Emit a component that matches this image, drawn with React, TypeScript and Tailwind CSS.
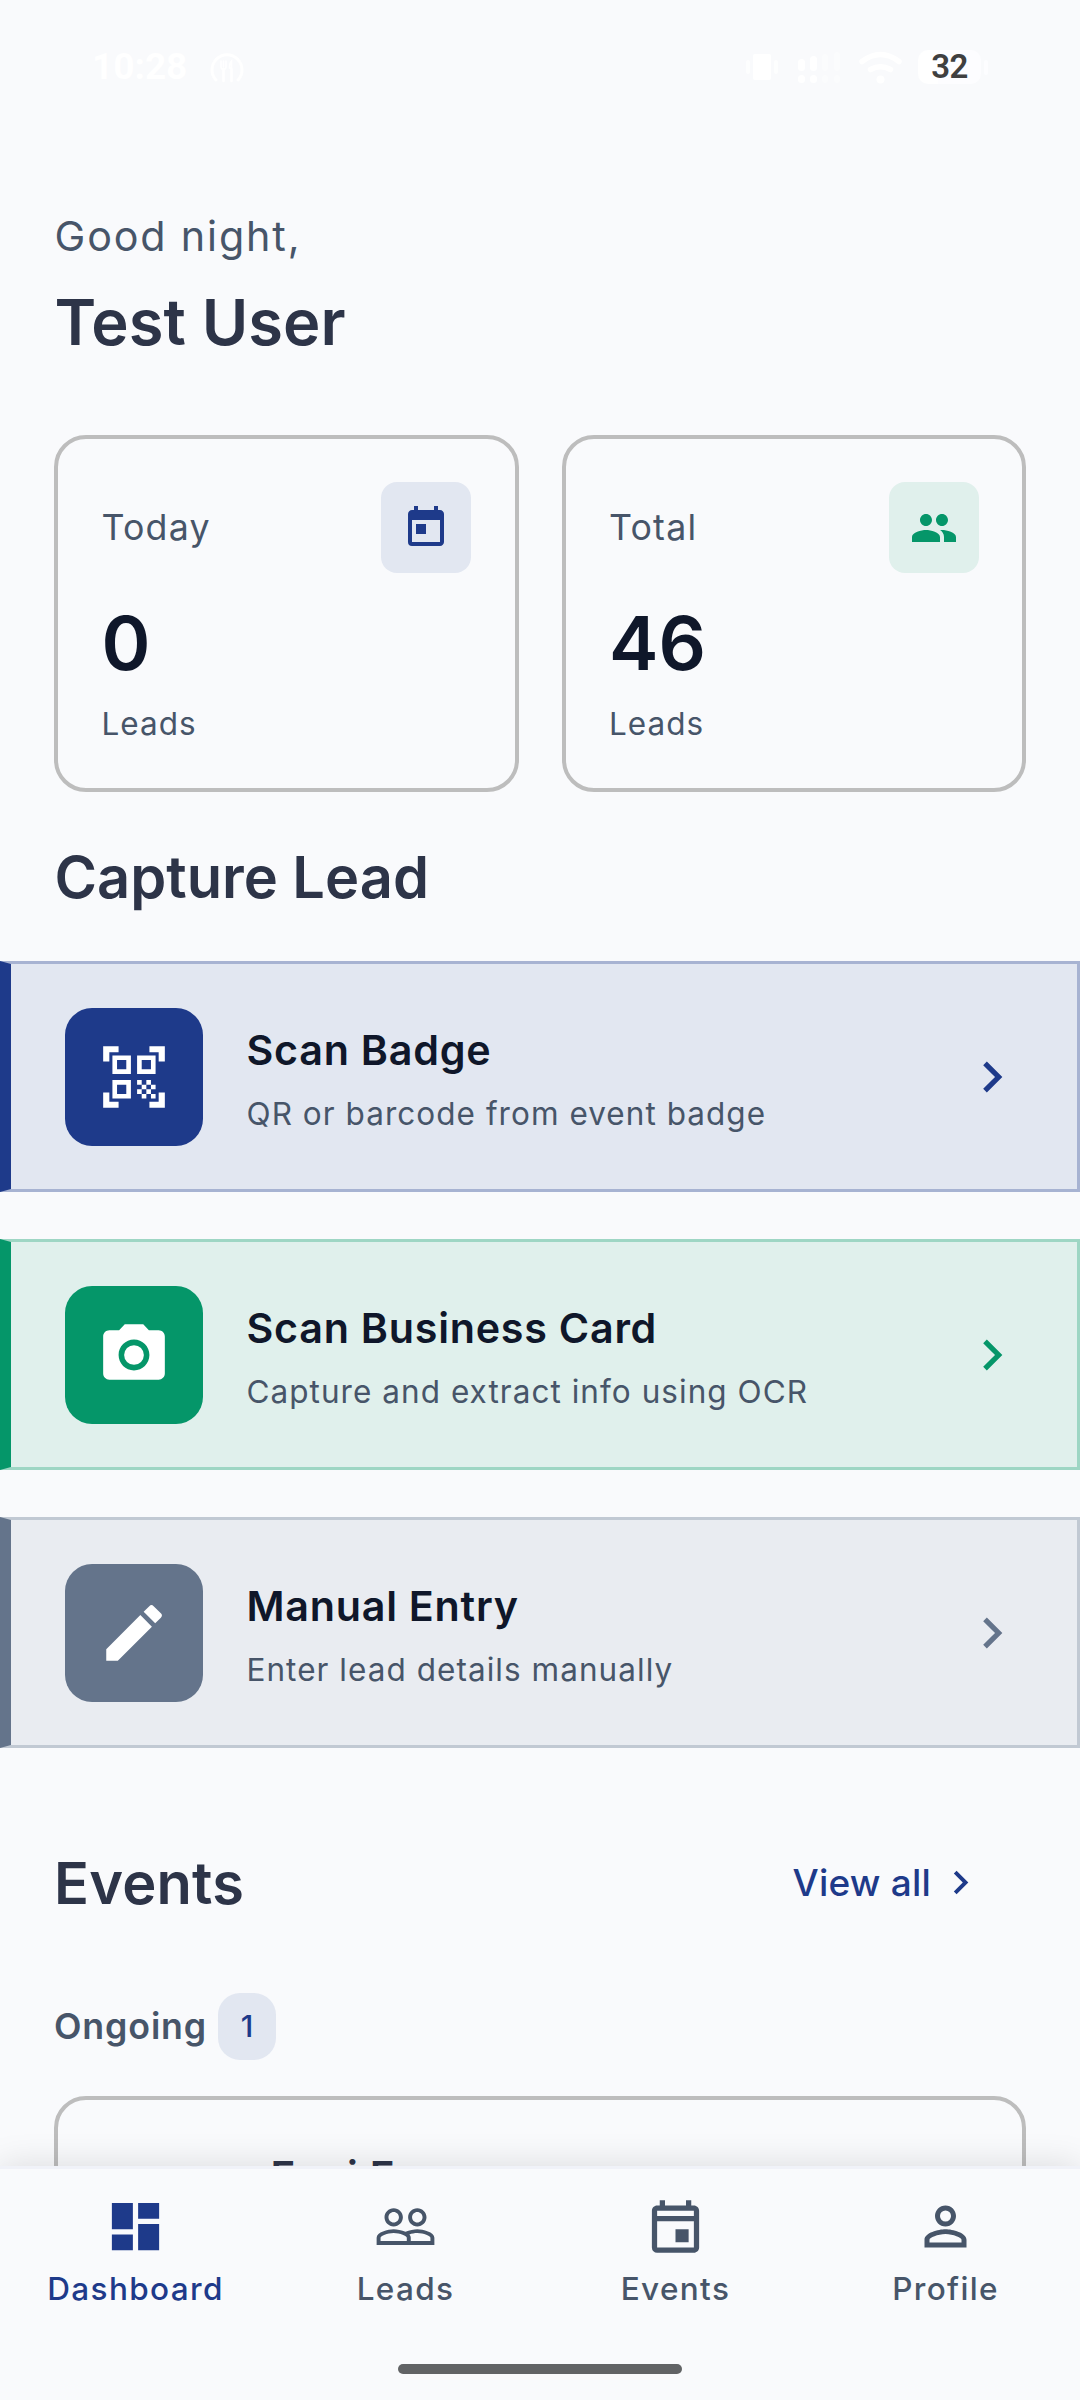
import type { ReactNode } from 'react';
import type { IconType } from 'react-icons';
import {
  MdCameraAlt,
  MdChevronRight,
  MdDashboard,
  MdEdit,
  MdOutlineEvent,
  MdPeople,
  MdPeopleOutline,
  MdPersonOutline,
  MdQrCodeScanner,
  MdToday,
} from 'react-icons/md';

function StatusBar() {
  return (
    <div className="flex h-[134px] shrink-0 items-start justify-between pt-[50px] pr-[92px] pl-[92px] font-[Roboto]">
      <div className="flex h-[34px] items-center text-white">
        <span className="w-[118px] text-[37px] leading-[34px] font-bold">10:28</span>
        <svg width="34" height="32" viewBox="0 0 34 32" fill="none" stroke="currentColor" strokeLinecap="round">
          <path d="M6 29A15 15 0 1 1 28 29" strokeWidth="3" />
          <path d="M13.5 18v12M21.5 18v12" strokeWidth="2.6" />
          <path d="M11 10v5.5q0 3 2.5 3t2.5-3v-5.5M13.5 10v6M21.5 10q-2 2-2 7h2z" strokeWidth="1.6" />
        </svg>
      </div>
      <div className="flex h-[34px] items-center">
        <svg width="32" height="28" viewBox="0 0 32 28" fill="#fff" className="mr-[20px]">
          <rect x="7" y="1" width="18" height="26" rx="2" />
          <rect x="0" y="7" width="4" height="14" rx="2" opacity=".7" />
          <rect x="28" y="7" width="4" height="14" rx="2" opacity=".7" />
        </svg>
        <svg width="43" height="32" viewBox="0 0 43 32" fill="#fff" className="mr-[18px]">
          <rect x="0" y="8" width="7" height="12" rx="3.5" />
          <rect x="0" y="24" width="7" height="8" rx="3.5" />
          <rect x="12" y="5" width="7" height="15" rx="3.5" />
          <rect x="12" y="24" width="7" height="8" rx="3.5" />
          <g opacity=".4">
            <rect x="24" y="3" width="6" height="17" rx="3" />
            <rect x="24" y="24" width="6" height="8" rx="3" />
            <rect x="36" y="1" width="6" height="19" rx="3" />
            <rect x="36" y="24" width="6" height="8" rx="3" />
          </g>
        </svg>
        <svg width="43" height="33" viewBox="0 0 43 33" fill="none" stroke="#fff" strokeLinecap="round" className="mr-[16px]">
          <path d="M3 10.5Q21.5-3.5 40 10.5" strokeWidth="5.5" />
          <path d="M11.5 18.5Q21.5 13 31.5 18.5" strokeWidth="5.5" />
          <circle cx="21.5" cy="28.5" r="4" fill="#fff" stroke="none" />
        </svg>
        <div className="flex h-[34px] w-[63px] items-center justify-center rounded-[10px] bg-linear-to-r from-white from-32% to-[#fdfdff] to-32%">
          <span className="text-[33px] leading-[34px] font-semibold tracking-[-0.5px] text-[#404040]">32</span>
        </div>
        <div className="ml-[3px] h-[15px] w-[4px] rounded-full bg-[#fdfdff]" />
      </div>
    </div>
  );
}

function StatCard({ label, value, tile, icon }: { label: string; value: string; tile: string; icon: ReactNode }) {
  return (
    <div className="h-[357px] flex-1 rounded-[32px] border-4 border-[#bdbdbd] px-[43.5px] pt-[43px]">
      <div className="flex h-[91px] items-center justify-between">
        <span className="text-[35.75px] tracking-[1.2px] text-[#475569]">{label}</span>
        <div className={`flex h-[91px] w-[90px] items-center justify-center rounded-[16px] ${tile}`}>{icon}</div>
      </div>
      <div className="mt-[25px] text-[74.25px] leading-[90px] font-semibold text-[#0f172a]">{value}</div>
      <div className="mt-[16px] text-[31.5px] leading-[40px] tracking-[1px] text-[#475569]">Leads</div>
    </div>
  );
}

type Action = { title: string; hint: string; icon: IconType; card: string; tile: string; chevron: string };

const actions: Action[] = [
  {
    title: 'Scan Badge',
    hint: 'QR or barcode from event badge',
    icon: MdQrCodeScanner,
    card: 'border-[#a7b3d2] border-l-[#1e3a8a] bg-[#e2e7f1]',
    tile: 'bg-[#1e3a8a]',
    chevron: 'text-[#1e3a8a]',
  },
  {
    title: 'Scan Business Card',
    hint: 'Capture and extract info using OCR',
    icon: MdCameraAlt,
    card: 'border-[#9ed6c4] border-l-[#059669] bg-[#e0f0ec]',
    tile: 'bg-[#059669]',
    chevron: 'text-[#059669]',
  },
  {
    title: 'Manual Entry',
    hint: 'Enter lead details manually',
    icon: MdEdit,
    card: 'border-[#c1c9d3] border-l-[#64748b] bg-[#e9ecf1]',
    tile: 'bg-[#64748b]',
    chevron: 'text-[#64748b]',
  },
];

function ActionCard({ title, hint, icon: Icon, card, tile, chevron }: Action) {
  return (
    <div className={`flex h-[231px] items-center border-3 border-l-[11px] pr-[54px] pl-[53.5px] ${card}`}>
      <div className={`flex size-[138px] items-center justify-center rounded-[27px] ${tile}`}>
        <Icon size={74} className="text-white" />
      </div>
      <div className="ml-[44px] flex-1 pt-[2px]">
        <div className="text-[41.25px] leading-[62px] font-semibold tracking-[0.75px] text-[#0f172a]">{title}</div>
        <div className="mt-[11px] text-[31.5px] leading-[44px] tracking-[1.04px] text-[#475569]">{hint}</div>
      </div>
      <MdChevronRight size={62} className={chevron} />
    </div>
  );
}

const tabs: { label: string; icon: IconType }[] = [
  { label: 'Dashboard', icon: MdDashboard },
  { label: 'Leads', icon: MdPeopleOutline },
  { label: 'Events', icon: MdOutlineEvent },
  { label: 'Profile', icon: MdPersonOutline },
];

function BottomNav() {
  return (
    <nav className="relative flex h-[234px] shrink-0 flex-col border-t-[3px] border-[#f0f2f8] bg-[#f9fafc] shadow-[0_0_33px_rgba(0,0,0,0.13)]">
      <div className="grid grid-cols-4 pt-[26px]">
        {tabs.map(({ label, icon: Icon }, i) => (
          <div
            key={label}
            className={`flex flex-col items-center ${i === 0 ? 'text-[#1e3a8a]' : 'text-[#475569]'}`}
          >
            <Icon size={63} />
            <span className="mt-[10.5px] pl-[1px] text-[31.5px] leading-[40px] font-medium tracking-[1.35px]">
              {label}
            </span>
          </div>
        ))}
      </div>
      <div className="mx-auto mt-auto mb-[26px] h-[10px] w-[284px] rounded-full bg-[#616365]" />
    </nav>
  );
}

export default function App() {
  return (
    <div className="flex h-[2400px] w-[1080px] flex-col overflow-hidden bg-[#f9fafc] font-[Inter,sans-serif] whitespace-nowrap">
      <StatusBar />

      <main className="min-h-0 flex-1 overflow-hidden">
        <header className="px-[54.5px] pt-[71.5px]">
          <p className="text-[41.25px] leading-[60px] tracking-[1.85px] text-[#475569]">Good night,</p>
          <h1 className="mt-[16.5px] text-[63.25px] leading-[80px] font-semibold text-[#2d3448]">Test User</h1>
        </header>

        <section className="mt-[73px] flex gap-[43px] px-[54px]">
          <StatCard
            label="Today"
            value="0"
            tile="bg-[#e2e7f1]"
            icon={<MdToday size={48} className="text-[#1e3a8a]" />}
          />
          <StatCard
            label="Total"
            value="46"
            tile="bg-[#e0f0ec]"
            icon={<MdPeople size={48} className="text-[#059669]" />}
          />
        </section>

        <h2 className="mt-[50px] px-[54.5px] text-[57.75px] leading-[70px] font-semibold text-[#2d3448]">Capture Lead</h2>
        <section className="mt-[49px] flex flex-col gap-[47px]">
          {actions.map((action) => (
            <ActionCard key={action.title} {...action} />
          ))}
        </section>

        <section className="px-[54px]">
          <div className="mt-[99.5px] flex h-[70px] items-center justify-between pr-[42px] text-[#2d3448]">
            <h2 className="text-[57.75px] leading-[70px] font-semibold tracking-[0.2px]">Events</h2>
            <span className="flex items-center text-[37px] font-medium tracking-[0.2px] text-[#1e3a8a]">
              View all
              <MdChevronRight size={47} className="ml-[6px]" />
            </span>
          </div>

          <div className="mt-[75.5px] flex h-[67px] items-center">
            <span className="pt-[1px] text-[35.75px] font-semibold tracking-[0.85px] text-[#475569]">Ongoing</span>
            <span className="ml-[11px] flex h-[67px] w-[58px] items-center justify-center rounded-[22px] bg-[#e2e7f1] text-[30.25px] font-medium text-[#1e3a8a]">
              1
            </span>
          </div>

          <div className="mt-[35.5px] flex h-[300px] rounded-[32px] border-4 border-[#bdbdbd] px-[43.5px]">
            <div className="mt-[66px] size-[121px] rounded-[27px] bg-[#e2e7f1]" />
            <span className="mt-[49px] ml-[48px] text-[41.25px] leading-[54px] font-semibold tracking-[0.78px] text-[#2d3448]">
              Expi Expo
            </span>
          </div>
        </section>
      </main>

      <BottomNav />
    </div>
  );
}
